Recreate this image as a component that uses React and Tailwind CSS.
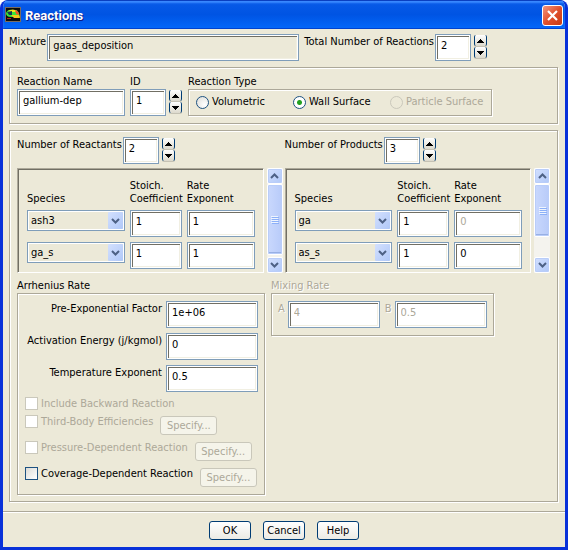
import React from 'react';
import clsx from 'clsx';

const FIELD =
  'block h-[27px] min-w-0 border border-[#7f9db9] pl-[5px] pr-1 pb-[5px] outline-none ' +
  'shadow-[inset_0_0_0_1px_#fff,inset_2px_2px_0_#716f64,inset_-2px_-2px_0_#f1efe2]';

const GROUP = 'border border-[#aca899] shadow-[1px_1px_0_#fff,inset_1px_1px_0_#fff]';

function Field({ className, readOnly, disabled, ...props }) {
  return (
    <input
      type="text"
      readOnly={readOnly}
      disabled={disabled}
      className={clsx(FIELD, readOnly ? 'bg-[#ece9d8]' : 'bg-white', disabled && 'text-[#aca899]', className)}
      {...props}
    />
  );
}

function Spinner({ label }) {
  const button =
    'flex h-[11px] w-[13px] items-center justify-center rounded-[2px] border-x border-[#003c74] bg-linear-to-b from-white to-[#dcd9cc] shadow-[0_1px_0_#c5c2b4]';
  return (
    <div className="flex shrink-0 flex-col gap-px pt-px">
      <button type="button" aria-label={`Increase ${label}`} className={button}>
        <svg width="7" height="4" viewBox="0 0 7 4" shapeRendering="crispEdges">
          <path d="M3 0h1v1h1v1h1v1h1v1H0V3h1V2h1V1h1z" />
        </svg>
      </button>
      <button type="button" aria-label={`Decrease ${label}`} className={button}>
        <svg width="7" height="4" viewBox="0 0 7 4" shapeRendering="crispEdges">
          <path d="M3 4h1V3h1V2h1V1h1V0H0v1h1v1h1v1h1z" />
        </svg>
      </button>
    </div>
  );
}

function Counter({ id, label, value }) {
  return (
    <div className="flex items-start">
      <label htmlFor={id} className="mr-px whitespace-nowrap leading-4">{label}</label>
      <Field id={id} defaultValue={value} className="mr-[3px] w-9" />
      <Spinner label={label} />
    </div>
  );
}

function Chevron({ up }) {
  return (
    <svg width="9" height="6" viewBox="0 0 9 6" className={clsx(up && 'rotate-180')}>
      <path d="M1 1l3.5 3.5L8 1" fill="none" stroke="#4d6185" strokeWidth="2" />
    </svg>
  );
}

function SpeciesSelect({ value, label }) {
  return (
    <div className="relative h-[21px]">
      <select
        aria-label={label}
        defaultValue={value}
        className="block h-full w-full appearance-none border border-[#7f9db9] bg-[#ece9d8] pl-[3px] pr-5 shadow-[inset_0_0_0_1px_#fff] outline-none"
      >
        <option>{value}</option>
      </select>
      <span className="pointer-events-none absolute inset-y-[2px] right-[2px] flex w-[15px] items-center justify-center rounded-[1px] bg-linear-to-br from-[#d3e0fe] to-[#b0c8f8]">
        <Chevron />
      </span>
    </div>
  );
}

function ScrollBar({ thumb }) {
  const arrow =
    'flex h-4 w-full shrink-0 items-center justify-center rounded-[2px] border border-white bg-linear-to-br from-[#d3e0fe] to-[#b0c8f8] shadow-[inset_0_0_0_1px_#b9cdf9]';
  return (
    <div className="flex w-4 shrink-0 flex-col bg-[#f4f3ee]">
      <button type="button" aria-label="Scroll up" className={arrow}>
        <Chevron up />
      </button>
      <div className="flex-1">
        <div
          className={clsx(
            'flex flex-col items-center justify-center gap-px rounded-[2px] border border-white bg-linear-to-r from-[#c9d8fd] to-[#b8cbf9] shadow-[inset_0_0_0_1px_#b9cdf9,inset_0_-2px_0_#98b0e4]',
            thumb
          )}
        >
          {[0, 1, 2, 3].map((i) => (
            <i key={i} className="block h-px w-[7px] bg-[#eef4fe] shadow-[1px_1px_0_#8cb0f8]" />
          ))}
        </div>
      </div>
      <button type="button" aria-label="Scroll down" className={arrow}>
        <Chevron />
      </button>
    </div>
  );
}

function SpeciesList({ rows, thumb }) {
  return (
    <div className="flex h-[105px] gap-[3px]">
      <div className="min-w-0 flex-1 border border-t-[#aca899] border-r-white border-b-white border-l-[#aca899] pt-[10px] pr-2 pl-[9px] shadow-[inset_1px_1px_0_#716f64]">
        <div className="grid grid-cols-[minmax(0,98fr)_minmax(0,52fr)_minmax(0,68fr)] items-end gap-[5px] leading-[13px]">
          <span>Species</span>
          <span>Stoich.<br />Coefficient</span>
          <span>Rate<br />Exponent</span>
          {rows.map((row) => (
            <React.Fragment key={row.species}>
              <div className="self-start">
                <SpeciesSelect value={row.species} label="Species" />
              </div>
              <Field aria-label={`${row.species} coefficient`} defaultValue={row.coefficient} />
              <Field aria-label={`${row.species} exponent`} defaultValue={row.exponent} disabled={row.fixed} />
            </React.Fragment>
          ))}
        </div>
      </div>
      <ScrollBar thumb={thumb} />
    </div>
  );
}

function Radio({ label, checked, disabled, className }) {
  return (
    <label className={clsx('flex items-center gap-[3px] whitespace-nowrap', disabled && 'text-[#aca899]', className)}>
      <input
        type="radio"
        name="reaction-type"
        defaultChecked={checked}
        disabled={disabled}
        className="size-[13px] shrink-0 appearance-none rounded-full border border-[#1d5281] bg-[radial-gradient(circle_at_70%_70%,#fff,#dcdcd7)] checked:bg-[radial-gradient(circle,#22a121_2px,#fff_3px)] disabled:border-[#cac8bb] disabled:bg-none"
      />
      {label}
    </label>
  );
}

function Check({ id, label, disabled, specify }) {
  return (
    <div className={clsx('flex items-start gap-[7px]', specify ? 'h-[21px]' : 'h-[13px]')}>
      <label className={clsx('flex items-center gap-[3px] whitespace-nowrap leading-[13px]', disabled && 'text-[#aca899]')}>
        <input
          id={id}
          type="checkbox"
          disabled={disabled}
          className="size-[13px] shrink-0 appearance-none border border-[#1d5281] bg-linear-to-br from-[#dcdcd7] to-white disabled:border-[#cac8bb] disabled:from-white"
        />
        {label}
      </label>
      {specify && (
        <button
          type="button"
          disabled
          className="mt-px h-[19px] w-[57px] rounded-[3px] border border-[#c9c7ba] bg-[#f5f4ea] leading-4 text-[#aca899]"
        >
          Specify...
        </button>
      )}
    </div>
  );
}

function RateField({ id, label, value }) {
  return (
    <div className="flex items-start justify-end gap-1">
      <label htmlFor={id} className="whitespace-nowrap leading-[15px]">{label}</label>
      <Field id={id} defaultValue={value} className="w-[92px]" />
    </div>
  );
}

function TitleBar() {
  return (
    <header className="flex h-[29px] items-center bg-linear-to-b from-[#0a5be8] via-[#0054e3] to-[#0468fb] pr-[5px] pl-[2px] shadow-[inset_0_1px_0_#0a3fc0,inset_0_3px_2px_#3b8bff,inset_0_-1px_0_#0043cf]">
      <svg width="16" height="15" viewBox="0 0 16 15" className="mr-1">
        <rect width="16" height="15" fill="#0c0c0c" />
        <rect x=".5" y=".5" width="15" height="14" fill="none" stroke="#7a6c60" />
        <path d="M1 6Q3 2 7 3h4q3 1 4 7H6Q1 10 1 6z" fill="#36e83a" />
        <path d="M3 4Q8 1 12 4l-2 1-5 0z" fill="#f2e71c" />
        <path d="M10 3q4 1 4 5l-3-1z" fill="#f8502a" />
        <path d="M2 5l5-1v4H4z" fill="#143a50" />
        <path d="M6 8h8l1 3H9z" fill="#f5c81c" />
        <path d="M2 11h4v1H2z" fill="#b42318" />
      </svg>
      <h1 className="flex-1 pt-[2px] font-[Roboto,sans-serif] text-[13px] font-bold text-white [text-shadow:1px_1px_0_#0a1883]">
        Reactions
      </h1>
      <button
        type="button"
        aria-label="Close"
        className="mt-[2px] -mr-[3px] flex size-[21px] items-center justify-center rounded-[3px] border border-white bg-linear-to-br from-[#f0947c] via-[#e0502c] to-[#c83a10]"
      >
        <svg width="13" height="13" viewBox="0 0 13 13">
          <path d="M2 2l9 9M11 2l-9 9" stroke="#fff" strokeWidth="2.2" />
        </svg>
      </button>
    </header>
  );
}

const REACTANTS = [
  { species: 'ash3', coefficient: '1', exponent: '1' },
  { species: 'ga_s', coefficient: '1', exponent: '1' },
];

const PRODUCTS = [
  { species: 'ga', coefficient: '1', exponent: '0', fixed: true },
  { species: 'as_s', coefficient: '1', exponent: '0' },
];

export default function App() {
  return (
    <div className="min-h-screen overflow-hidden rounded-t-lg border-x-[3px] border-b-[3px] border-[#0831d9] bg-[#ece9d8] font-['DejaVu_Sans_Condensed','DejaVu_Sans',sans-serif] text-[11px] text-black">
      <TitleBar />

      <main className="flex flex-col gap-[6px] pt-[5px] pr-[7px] pl-[6px]">
        <div className="flex items-start pr-[71px]">
          <label htmlFor="mixture" className="mr-px leading-4">Mixture</label>
          <Field id="mixture" defaultValue="gaas_deposition" readOnly className="mr-[5px] flex-1" />
          <Counter id="total" label="Total Number of Reactions" value="2" />
        </div>

        <section className={clsx(GROUP, 'flex items-start p-[7px]')}>
          <div className="mr-[5px] w-[108px]">
            <label htmlFor="name" className="block leading-[14px]">Reaction Name</label>
            <Field id="name" defaultValue="gallium-dep" className="w-full" />
          </div>
          <div className="mr-[6px]">
            <label htmlFor="reaction-id" className="block leading-[14px]">ID</label>
            <div className="flex gap-[3px]">
              <Field id="reaction-id" defaultValue="1" className="w-9" />
              <Spinner label="ID" />
            </div>
          </div>
          <div role="radiogroup" aria-labelledby="type-label">
            <div id="type-label" className="leading-[14px]">Reaction Type</div>
            <div className={clsx(GROUP, 'flex h-[27px] w-[304px] items-center pl-[7px]')}>
              <Radio label="Volumetric" className="w-[97px]" />
              <Radio label="Wall Surface" checked className="w-[97px]" />
              <Radio label="Particle Surface" disabled />
            </div>
          </div>
        </section>

        <section className={clsx(GROUP, 'px-[7px] py-[6px]')}>
          <div className="grid grid-cols-2 gap-x-[2px] gap-y-1">
            <Counter id="reactants" label="Number of Reactants" value="2" />
            <Counter id="products" label="Number of Products" value="3" />
            <SpeciesList rows={REACTANTS} thumb="h-[71px]" />
            <SpeciesList rows={PRODUCTS} thumb="h-[53px]" />
          </div>

          <div className="mt-[6px] flex items-start gap-[6px]">
            <div className="w-[248px]">
              <h2 className="leading-[14px]">Arrhenius Rate</h2>
              <div className={clsx(GROUP, 'flex flex-col gap-[5px] pt-[7px] pr-[6px] pb-[6px] pl-[7px]')}>
                <RateField id="factor" label="Pre-Exponential Factor" value="1e+06" />
                <RateField id="energy" label="Activation Energy (j/kgmol)" value="0" />
                <RateField id="temperature" label="Temperature Exponent" value="0.5" />
                <Check id="backward" label="Include Backward Reaction" disabled />
                <Check id="third-body" label="Third-Body Efficiencies" disabled specify />
                <Check id="pressure" label="Pressure-Dependent Reaction" disabled specify />
                <Check id="coverage" label="Coverage-Dependent Reaction" specify />
              </div>
            </div>
            <div className="text-[#aca899]">
              <h2 className="leading-[14px] [text-shadow:1px_1px_0_#fff]">Mixing Rate</h2>
              <div className={clsx(GROUP, 'flex gap-[5px] px-[6px] py-[7px]')}>
                <div className="flex items-start gap-[3px]">
                  <label htmlFor="mix-a" className="leading-[15px] [text-shadow:1px_1px_0_#fff]">A</label>
                  <Field id="mix-a" defaultValue="4" disabled className="w-[92px]" />
                </div>
                <div className="flex items-start gap-[3px]">
                  <label htmlFor="mix-b" className="leading-[15px] [text-shadow:1px_1px_0_#fff]">B</label>
                  <Field id="mix-b" defaultValue="0.5" disabled className="w-[92px]" />
                </div>
              </div>
            </div>
          </div>
        </section>
      </main>

      <footer className="mt-[9px] flex justify-center gap-3 border-t border-[#aca899] pt-[9px] pb-[7px] shadow-[inset_0_1px_0_#fff]">
        {['OK', 'Cancel', 'Help'].map((name) => (
          <button
            key={name}
            type="button"
            className="h-[19px] w-[42px] rounded-[3px] border border-[#003c74] bg-linear-to-b from-white to-[#ecebe5] leading-4"
          >
            {name}
          </button>
        ))}
      </footer>
    </div>
  );
}
